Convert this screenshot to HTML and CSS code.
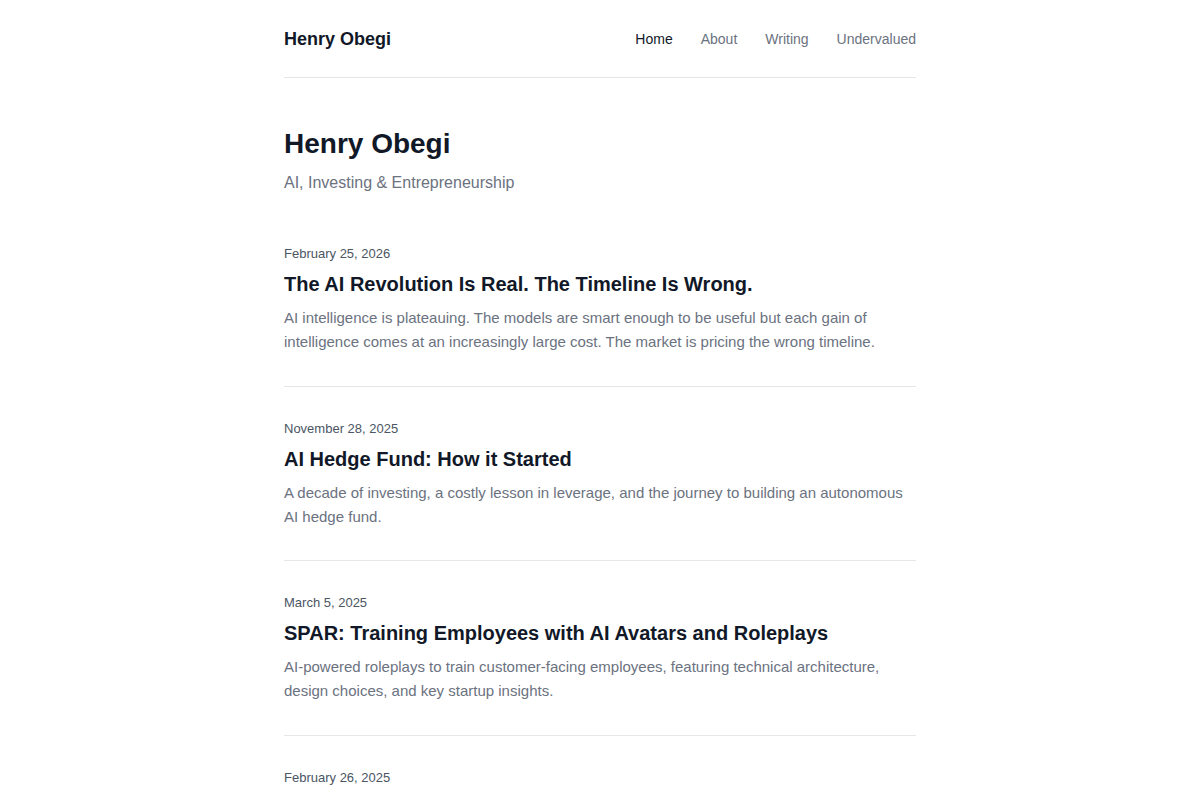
FILE: index.html
```html
<!DOCTYPE html>
<html lang="en">
  <head>
    <meta charset="UTF-8" />
    <meta name="viewport" content="width=device-width, initial-scale=1.0" />
    <title>Henry Obegi</title>
    <link rel="stylesheet" href="styles.css">
  </head>
  <body>
    <div class="container">
      <header class="site-header">
        <a href="#" class="site-name">Henry Obegi</a>
        <nav class="nav">
          <a href="#" class="active">Home</a>
          <a href="#">About</a>
          <a href="#">Writing</a>
          <a href="#">Undervalued</a>
        </nav>
      </header>

      <main>
        <section class="hero">
          <h1>Henry Obegi</h1>
          <p class="tagline">AI, Investing &amp; Entrepreneurship</p>
        </section>

        <div class="posts">
          <article class="post">
            <div class="post-date">February 25, 2026</div>
            <h2 class="post-title"><a href="#">The AI Revolution Is Real. The Timeline Is Wrong.</a></h2>
            <p class="post-excerpt">
              AI intelligence is plateauing. The models are smart enough to be useful but each gain of
              intelligence comes at an increasingly large cost. The market is pricing the wrong timeline.
            </p>
          </article>

          <article class="post">
            <div class="post-date">November 28, 2025</div>
            <h2 class="post-title"><a href="#">AI Hedge Fund: How it Started</a></h2>
            <p class="post-excerpt">
              A decade of investing, a costly lesson in leverage, and the journey to building an autonomous
              AI hedge fund.
            </p>
          </article>

          <article class="post">
            <div class="post-date">March 5, 2025</div>
            <h2 class="post-title"><a href="#">SPAR: Training Employees with AI Avatars and Roleplays</a></h2>
            <p class="post-excerpt">
              AI-powered roleplays to train customer-facing employees, featuring technical architecture,
              design choices, and key startup insights.
            </p>
          </article>

          <article class="post">
            <div class="post-date">February 26, 2025</div>
          </article>
        </div>
      </main>
    </div>
  </body>
</html>
```

FILE: styles.css
```css
body {
  margin: 0;
  font-family: "Liberation Sans", Arial, sans-serif;
  color: #111827;
  background-color: #fff;
}

a {
  color: inherit;
  text-decoration: none;
}

.container {
  max-width: 632px;
  margin: 0 auto;
}

/* top bar */
.site-header {
  display: flex;
  justify-content: space-between;
  align-items: center;
  padding: 25px 0 24px;
  border-bottom: 1px solid #e5e7eb;
}

.site-name {
  font-size: 18px;
  line-height: 28px;
  font-weight: 700;
  color: #111827;
}

.nav {
  display: flex;
  gap: 28px;
  font-size: 14px;
  line-height: 20px;
}

.nav a {
  color: #6b7280;
}

.nav a.active {
  color: #111827;
}

/* intro */
.hero {
  padding-top: 48px;
  margin-bottom: 17px;
}

.hero h1 {
  margin: 0;
  font-size: 28px;
  line-height: 36px;
  font-weight: 700;
  color: #111827;
}

.tagline {
  margin: 9px 0 0;
  font-size: 16px;
  line-height: 24px;
  color: #6b7280;
}

/* post list */
.post {
  padding: 32px 0 31.5px;
  border-bottom: 1px solid #e5e7eb;
}

.post-date {
  font-size: 13px;
  line-height: 20px;
  color: #4b5563;
}

.post-title {
  margin: 6px 0 0;
  font-size: 20px;
  line-height: 28px;
  font-weight: 700;
  color: #111827;
}

.post-excerpt {
  margin: 8px 0 0;
  font-size: 15px;
  line-height: 24px;
  color: #6b7280;
}
```
